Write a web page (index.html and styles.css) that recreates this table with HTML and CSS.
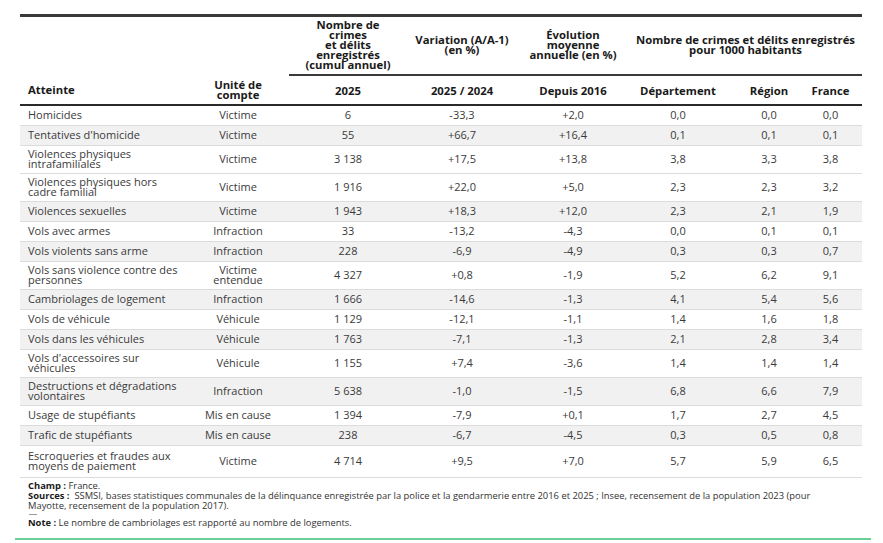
FILE: index.html
```html
<!DOCTYPE html>
<html lang="fr">
<head>
<meta charset="utf-8">
<link rel="stylesheet" href="styles.css">
</head>
<body>
<div class="page">
  <table class="stats">
    <colgroup>
      <col class="c1"><col class="c2"><col class="c3"><col class="c4"><col class="c5"><col class="c6"><col class="c7"><col class="c8">
    </colgroup>
    <thead>
      <tr class="h1">
        <th class="blank"></th>
        <th class="blank"></th>
        <th>Nombre de<br>crimes<br>et délits<br>enregistrés<br>(cumul annuel)</th>
        <th>Variation (A/A-1)<br>(en %)</th>
        <th>Évolution<br>moyenne<br>annuelle (en %)</th>
        <th colspan="3">Nombre de crimes et délits enregistrés<br>pour 1000 habitants</th>
      </tr>
      <tr class="h2">
        <th class="left">Atteinte</th>
        <th>Unité de<br>compte</th>
        <th>2025</th>
        <th>2025 / 2024</th>
        <th>Depuis 2016</th>
        <th>Département</th>
        <th>Région</th>
        <th class="last">France</th>
      </tr>
    </thead>
    <tbody>
      <tr><td class="left">Homicides</td><td>Victime</td><td>6</td><td>-33,3</td><td>+2,0</td><td>0,0</td><td>0,0</td><td class="last">0,0</td></tr>
      <tr class="alt"><td class="left">Tentatives d'homicide</td><td>Victime</td><td>55</td><td>+66,7</td><td>+16,4</td><td>0,1</td><td>0,1</td><td class="last">0,1</td></tr>
      <tr class="tall"><td class="left">Violences physiques<br>intrafamiliales</td><td>Victime</td><td>3&nbsp;138</td><td>+17,5</td><td>+13,8</td><td>3,8</td><td>3,3</td><td class="last">3,8</td></tr>
      <tr class="tall"><td class="left">Violences physiques hors<br>cadre familial</td><td>Victime</td><td>1&nbsp;916</td><td>+22,0</td><td>+5,0</td><td>2,3</td><td>2,3</td><td class="last">3,2</td></tr>
      <tr class="alt"><td class="left">Violences sexuelles</td><td>Victime</td><td>1&nbsp;943</td><td>+18,3</td><td>+12,0</td><td>2,3</td><td>2,1</td><td class="last">1,9</td></tr>
      <tr><td class="left">Vols avec armes</td><td>Infraction</td><td>33</td><td>-13,2</td><td>-4,3</td><td>0,0</td><td>0,1</td><td class="last">0,1</td></tr>
      <tr class="alt"><td class="left">Vols violents sans arme</td><td>Infraction</td><td>228</td><td>-6,9</td><td>-4,9</td><td>0,3</td><td>0,3</td><td class="last">0,7</td></tr>
      <tr class="tall"><td class="left">Vols sans violence contre des<br>personnes</td><td>Victime<br>entendue</td><td>4&nbsp;327</td><td>+0,8</td><td>-1,9</td><td>5,2</td><td>6,2</td><td class="last">9,1</td></tr>
      <tr class="alt"><td class="left">Cambriolages de logement</td><td>Infraction</td><td>1&nbsp;666</td><td>-14,6</td><td>-1,3</td><td>4,1</td><td>5,4</td><td class="last">5,6</td></tr>
      <tr><td class="left">Vols de véhicule</td><td>Véhicule</td><td>1&nbsp;129</td><td>-12,1</td><td>-1,1</td><td>1,4</td><td>1,6</td><td class="last">1,8</td></tr>
      <tr class="alt"><td class="left">Vols dans les véhicules</td><td>Véhicule</td><td>1&nbsp;763</td><td>-7,1</td><td>-1,3</td><td>2,1</td><td>2,8</td><td class="last">3,4</td></tr>
      <tr class="tall"><td class="left">Vols d'accessoires sur<br>véhicules</td><td>Véhicule</td><td>1&nbsp;155</td><td>+7,4</td><td>-3,6</td><td>1,4</td><td>1,4</td><td class="last">1,4</td></tr>
      <tr class="alt tall"><td class="left">Destructions et dégradations<br>volontaires</td><td>Infraction</td><td>5&nbsp;638</td><td>-1,0</td><td>-1,5</td><td>6,8</td><td>6,6</td><td class="last">7,9</td></tr>
      <tr><td class="left">Usage de stupéfiants</td><td>Mis en cause</td><td>1&nbsp;394</td><td>-7,9</td><td>+0,1</td><td>1,7</td><td>2,7</td><td class="last">4,5</td></tr>
      <tr class="alt"><td class="left">Trafic de stupéfiants</td><td>Mis en cause</td><td>238</td><td>-6,7</td><td>-4,5</td><td>0,3</td><td>0,5</td><td class="last">0,8</td></tr>
      <tr class="tall big"><td class="left">Escroqueries et fraudes aux<br>moyens de paiement</td><td>Victime</td><td>4&nbsp;714</td><td>+9,5</td><td>+7,0</td><td>5,7</td><td>5,9</td><td class="last">6,5</td></tr>
    </tbody>
  </table>
  <div class="notes">
    <p><b>Champ :</b> France.</p>
    <p><b>Sources :</b>&nbsp; SSMSI, bases statistiques communales de la délinquance enregistrée par la police et la gendarmerie entre 2016 et 2025 ; Insee, recensement de la population 2023 (pour<br>Mayotte, recensement de la population 2017).</p>
    <div class="dash"></div>
    <p><b>Note :</b> Le nombre de cambriolages est rapporté au nombre de logements.</p>
  </div>
  <div class="rule"></div>
</div>
</body>
</html>
```

FILE: styles.css
```css
html, body {
  margin: 0;
  padding: 0;
  background: #ffffff;
}

body {
  font-family: "Open Sans", "Noto Sans", sans-serif;
  color: #3a3a3a;
}

.page {
  width: 856px;
  margin-left: 15px;
  padding-top: 14px;
}

.stats {
  margin-left: 5px;
  width: 842px;
  table-layout: fixed;
  border-collapse: collapse;
  border-top: 3px solid #3a3a3a;
}

.c1 { width: 167px; }
.c2 { width: 102px; }
.c3 { width: 118px; }
.c4 { width: 110px; }
.c5 { width: 112px; }
.c6 { width: 98px; }
.c7 { width: 84px; }
.c8 { width: 51px; }

th {
  font-weight: 700;
  color: #1a1a1a;
  font-size: 11.3px;
  line-height: 10px;
  text-align: center;
  padding: 0 2px;
  vertical-align: middle;
  white-space: nowrap;
}

.h1 {
  height: 59px;
}

.h1 th {
  border-bottom: 2px solid #3a3a3a;
}

.h1 th.blank {
  border-bottom: none;
}

.h2 {
  height: 30px;
}

.h2 th {
  border-bottom: 2px solid #2a2a2a;
  padding-top: 2px;
}

th.left, td.left {
  text-align: left;
  padding-left: 8px;
}

th.last, td.last {
  padding-right: 12px;
  padding-left: 0;
}

td {
  font-size: 11px;
  line-height: 10px;
  text-align: center;
  vertical-align: middle;
  padding: 0 4px;
  height: 19px;
  border-bottom: 1px solid #dcdcdc;
  white-space: nowrap;
}

tr.tall td {
  height: 27px;
}

tr.big td {
  height: 31px;
}

tr.alt td {
  background: #f1f1f1;
}

.notes {
  padding: 3px 0 0 13px;
  font-size: 9.4px;
  line-height: 10px;
  color: #333333;
}

.notes p {
  margin: 0;
}

.notes b {
  color: #1a1a1a;
}

.notes .dash {
  width: 8px;
  height: 1px;
  background: #9a9a9a;
  margin: 3px 0 3px 1px;
}

.rule {
  margin-top: 10px;
  width: 856px;
  height: 2px;
  background: #6ccf95;
}
```
